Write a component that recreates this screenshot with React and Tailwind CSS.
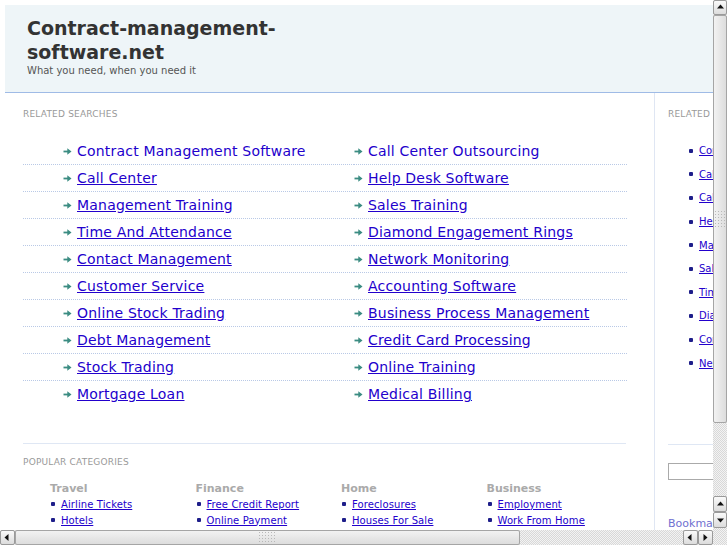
import React from 'react'

const related = [
  ['Contract Management Software', 'Call Center Outsourcing'],
  ['Call Center', 'Help Desk Software'],
  ['Management Training', 'Sales Training'],
  ['Time And Attendance', 'Diamond Engagement Rings'],
  ['Contact Management', 'Network Monitoring'],
  ['Customer Service', 'Accounting Software'],
  ['Online Stock Trading', 'Business Process Management'],
  ['Debt Management', 'Credit Card Processing'],
  ['Stock Trading', 'Online Training'],
  ['Mortgage Loan', 'Medical Billing'],
]

const side = [
  'Contract Management Software', 'Call Center', 'Call Center Outsourcing', 'Help Desk Software',
  'Management Training', 'Sales Training', 'Time And Attendance', 'Diamond Engagement Rings',
  'Contact Management', 'Network Monitoring',
]

const categories = [
  { title: 'Travel', links: ['Airline Tickets', 'Hotels'] },
  { title: 'Finance', links: ['Free Credit Report', 'Online Payment'] },
  { title: 'Home', links: ['Foreclosures', 'Houses For Sale'] },
  { title: 'Business', links: ['Employment', 'Work From Home'] },
]

function Arrow() {
  return (
    <svg width="9" height="7" viewBox="0 0 9 7" className="shrink-0">
      <path d="M0.5 3.5h4.5" stroke="#3b8c82" strokeWidth="1.8" />
      <path d="M4.3 0.3l4.2 3.2-4.2 3.2z" fill="#3b8c82" />
    </svg>
  )
}

function Bullet() {
  return <span className="w-[4px] h-[4px] rounded-[1px] bg-[#1e1e8a] shrink-0" />
}

function Tri({ dir }) {
  const d = {
    up: 'M1 5.5L4.5 1.5 8 5.5z',
    down: 'M1 2.5L4.5 6.5 8 2.5z',
    left: 'M5.5 1L1.5 4.5 5.5 8z',
    right: 'M2.5 1L6.5 4.5 2.5 8z',
  }[dir]
  return (
    <svg width="9" height="9" viewBox="0 0 9 9">
      <path d={d} fill="#111" />
    </svg>
  )
}

function Btn({ dir, className = '' }) {
  return (
    <div className={`flex items-center justify-center border border-[#9a9a9a] rounded-[2px] bg-gradient-to-b from-[#fafafa] to-[#dcdcdc] ${className}`}>
      <Tri dir={dir} />
    </div>
  )
}

function Grip({ vertical }) {
  const dots = []
  for (let r = 0; r < (vertical ? 6 : 4); r++)
    for (let c = 0; c < (vertical ? 4 : 6); c++)
      dots.push(<rect key={`${r}-${c}`} x={c * 3} y={r * 3} width="1" height="1" fill="#b8b8b8" />)
  return (
    <svg width={vertical ? 11 : 17} height={vertical ? 17 : 11} viewBox={vertical ? '0 0 11 17' : '0 0 17 11'}>
      {dots}
    </svg>
  )
}

const track = 'bg-[repeating-conic-gradient(#d8d8d8_0%_25%,#f3f3f3_0%_50%)] bg-[length:2px_2px]'

export default function App() {
  return (
    <div className="w-[727px] h-[545px] overflow-hidden bg-white grid grid-cols-[713px_14px] grid-rows-[530px_15px] font-['DejaVu_Sans',sans-serif]">
      {/* page */}
      <div className="overflow-hidden">
        <div className="w-[1000px] p-[5px]">
          <div className="h-[88px] bg-[#eef5f8] border-b border-[#9fbbe6] pl-[22px] pt-[11px]">
            <h1 className="w-[280px] text-[19px] leading-[24px] font-bold text-[#333]">Contract-management-software.net</h1>
            <p className="text-[10px] leading-[13px] text-[#555]">What you need, when you need it</p>
          </div>

          <div className="flex">
            <div className="w-[650px] shrink-0 pl-[18px] pr-[28px] pt-[15px] border-r border-[#dfe6f3]">
              <div className="text-[9px] leading-[12px] text-[#999] tracking-[0.2px]">RELATED SEARCHES</div>
              <div className="grid grid-cols-[331px_273px] mt-[18px]">
                {related.map((pair, i) =>
                  pair.map((t, j) => (
                    <div key={`${i}-${j}`}
                      className={`h-[27px] flex items-center gap-[5px] ${j === 0 ? 'pl-[40px]' : ''} ${i < related.length - 1 ? 'border-b border-dotted border-[#b9c9e6]' : ''}`}>
                      <Arrow />
                      <a href="#" className={`text-[14px] leading-[17px] text-[#2200cc] tracking-[0.2px] ${i === 0 ? 'no-underline' : 'underline'}`}>{t}</a>
                    </div>
                  ))
                )}
              </div>
              <div className="h-px bg-[#dfe7f4] mt-[35px]" />
              <div className="text-[9px] leading-[12px] text-[#999] tracking-[0.2px] mt-[12px]">POPULAR CATEGORIES</div>
              <div className="flex pl-[27px] mt-[14px]">
                {categories.map(c => (
                  <div key={c.title} className="w-[145.5px] shrink-0">
                    <div className="text-[11px] leading-[14px] font-bold text-[#aaa]">{c.title}</div>
                    <ul>
                      {c.links.map(l => (
                        <li key={l} className="h-[16px] flex items-center gap-[6px] pl-[1px]">
                          <Bullet />
                          <a href="#" className="text-[10px] leading-[13px] text-[#2200cc] underline tracking-[0.1px]">{l}</a>
                        </li>
                      ))}
                    </ul>
                  </div>
                ))}
              </div>
            </div>

            <div className="w-[300px] shrink-0 pl-[13px] pt-[15px]">
              <div className="text-[9px] leading-[12px] text-[#999] tracking-[0.2px]">RELATED</div>
              <ul className="mt-[19px] pl-[21px]">
                {side.map(s => (
                  <li key={s} className="h-[23.6px] flex items-center gap-[6px]">
                    <Bullet />
                    <a href="#" className="text-[10px] leading-[13px] text-[#2200cc] underline">{s}</a>
                  </li>
                ))}
              </ul>
              <div className="h-px bg-[#dfe7f4] mt-[69px]" />
              <input className="block mt-[18px] w-[120px] h-[17px] border border-[#aaa]" />
              <div className="mt-[37px] text-[11px] leading-[14px] text-[#7070d0]">Bookmark</div>
            </div>
          </div>
        </div>
      </div>

      {/* vertical scrollbar */}
      <div className={`flex flex-col ${track}`}>
        <Btn dir="up" className="h-[15px]" />
        <div className="h-[408px] border border-[#a5a5a5] rounded-[2px] bg-gradient-to-r from-[#f2f2f2] to-[#dddddd] flex items-center justify-center">
          <Grip vertical />
        </div>
        <div className="flex-1" />
        <Btn dir="up" className="h-[16px]" />
        <Btn dir="down" className="h-[16px]" />
        <div className="h-[2px]" />
      </div>

      {/* horizontal scrollbar */}
      <div className={`flex ${track}`}>
        <Btn dir="left" className="w-[15px]" />
        <div className="w-[505px] border border-[#a5a5a5] rounded-[2px] bg-gradient-to-b from-[#f2f2f2] to-[#dddddd] flex items-center justify-center">
          <Grip />
        </div>
        <div className="flex-1" />
        <Btn dir="left" className="w-[15px]" />
        <Btn dir="right" className="w-[15px]" />
      </div>
      <div className={track} />
    </div>
  )
}
